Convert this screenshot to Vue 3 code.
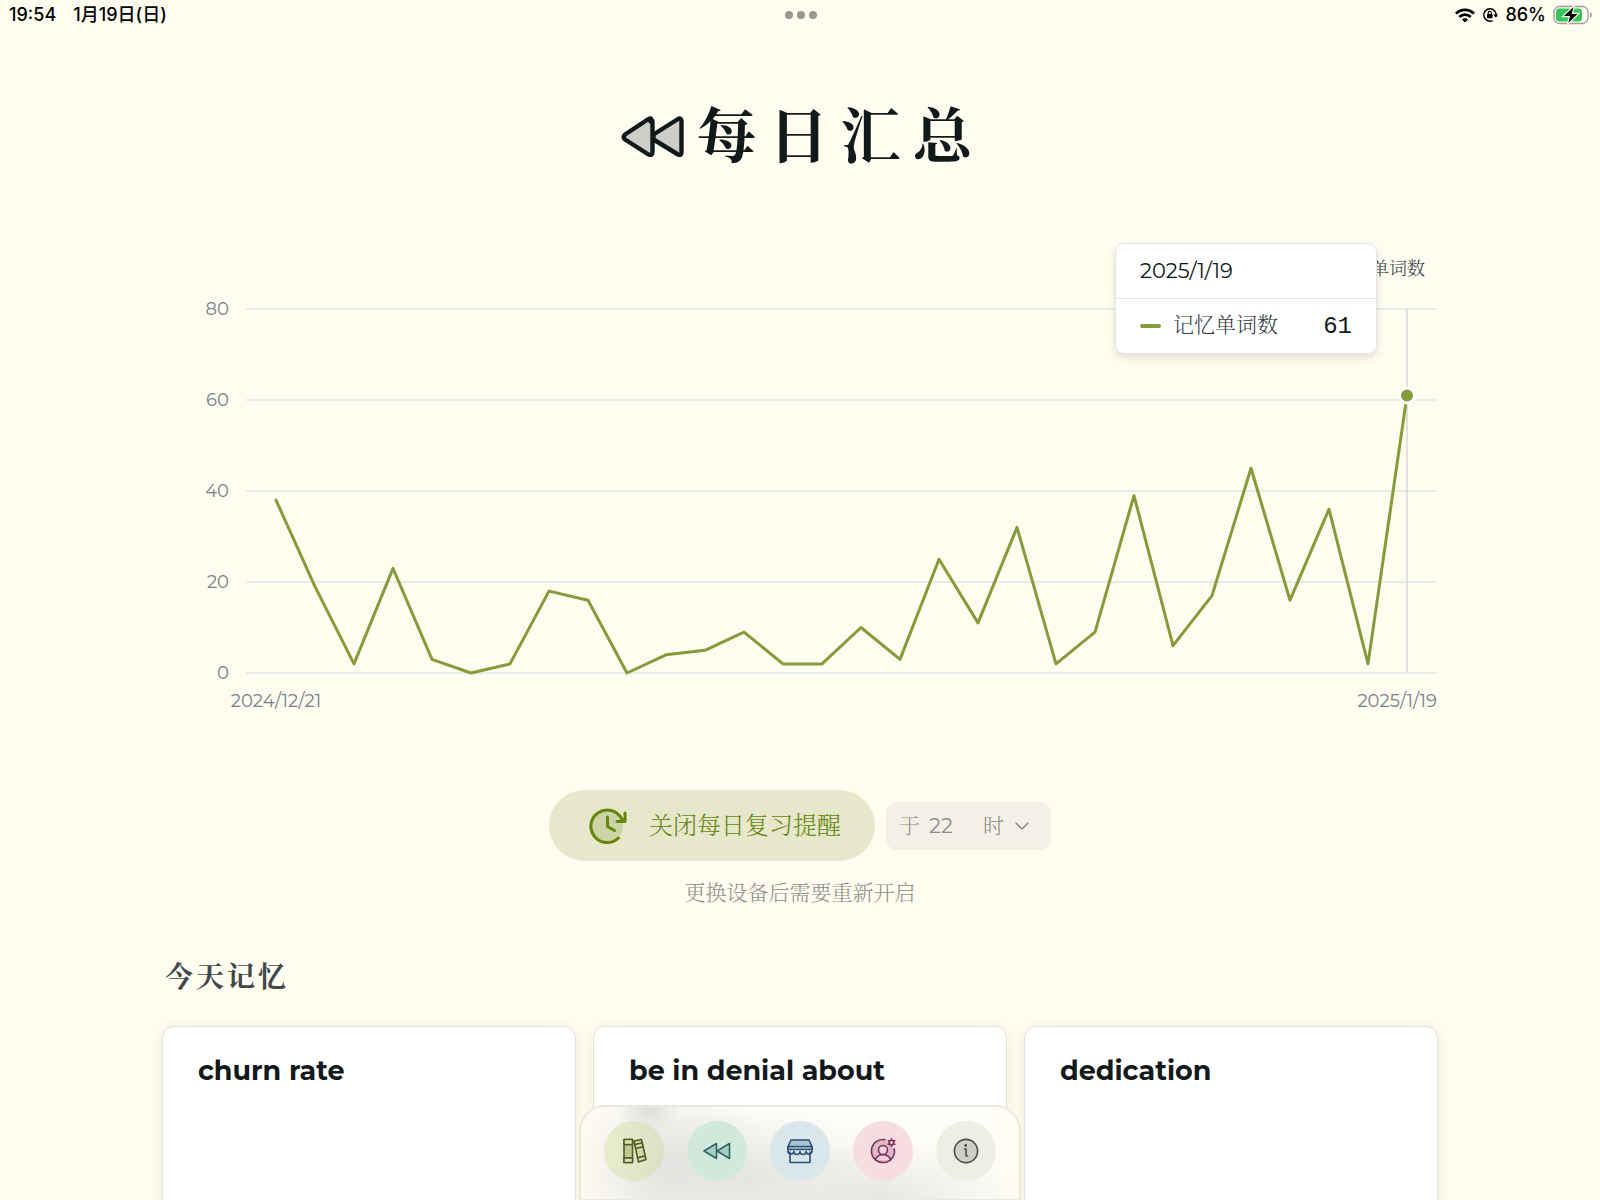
<script setup>
import { ref, computed } from 'vue'

const values = [38, 19, 2, 23, 3, 0, 2, 18, 16, 0, 4, 5, 9, 2, 2, 10, 3, 25, 11, 32, 2, 9, 39, 6, 17, 45, 16, 36, 2, 61]
const ticks = [80, 60, 40, 20, 0]
const plot = { left: 84, right: 1275, top: 80, bottom: 444, inset: 30 }

const xOf = (i) => plot.left + plot.inset + (i * (plot.right - plot.left - plot.inset * 2)) / (values.length - 1)
const yOf = (v) => plot.bottom - (v * (plot.bottom - plot.top)) / 80

const points = computed(() => values.map((v, i) => `${xOf(i).toFixed(1)},${yOf(v).toFixed(1)}`).join(' '))
const lastX = xOf(values.length - 1)
const lastY = yOf(values[values.length - 1])

const hour = ref(22)
const hours = Array.from({ length: 24 }, (_, i) => i)
const words = ['churn rate', 'be in denial about', 'dedication']
</script>

<template>
  <div class="page">
    <header class="status">
      <div class="status-side">
        <span>19:54</span>
        <span>1月19日(日)</span>
      </div>
      <div class="dots"><i></i><i></i><i></i></div>
      <div class="status-side status-right">
        <svg class="wifi" width="20" height="15" viewBox="0 0 20 15" fill="none" stroke="#000" stroke-width="2.7">
          <path d="M1 5.6C6 .6 14 .6 19 5.6" />
          <path d="M4.3 9C7.6 5.8 12.4 5.8 15.7 9" />
          <path d="M10 14.6 6.9 11.4C8.6 9.8 11.4 9.8 13.1 11.4Z" fill="#000" stroke="none" />
        </svg>
        <svg class="lock" width="16" height="16" viewBox="0 0 16 16" fill="none" stroke="#000" stroke-width="1.5">
          <path d="M10.6 13.6A6.2 6.2 0 1 1 13.9 9.8" />
          <path d="M11.4 7.6h4.6l-2.3 3.2z" fill="#000" stroke="none" />
          <rect x="5" y="7" width="5.6" height="4.2" rx=".6" fill="#000" stroke="none" />
          <path d="M6.2 7.4V6a1.6 1.6 0 0 1 3.2 0v1.4" stroke-width="1.1" />
        </svg>
        <span>86%</span>
        <svg class="battery" width="40" height="20" viewBox="0 0 40 20">
          <rect x="1" y="1.5" width="34" height="17" rx="5.5" fill="none" stroke="#9d9d95" stroke-width="1.3" />
          <rect x="3" y="3.5" width="26" height="13" rx="3.5" fill="#34c759" />
          <path d="M37 7v6c2.4-.8 2.4-5.2 0-6z" fill="#9d9d95" />
          <path d="M21.500 0 9.500 11.600h6.700L14.300 20 26 8.400h-6.500z" fill="#000" stroke="#fffdf0" stroke-width="1.2" />
        </svg>
      </div>
    </header>

    <main class="content">
      <h1 class="title">
        <svg width="64" height="42" viewBox="0 0 64 42" fill="#cfcdc7" stroke="#12191b" stroke-width="4.4" stroke-linejoin="round">
          <path d="M29.5 5.5Q31.5 1 27.5 3L4 18.5Q1.5 21 4 23.5L27.5 38.5Q31.5 40 31.5 36V5Z" />
          <path d="M60.5 5Q60 1.5 57 3L32.5 18.500V23.500L57 38.500Q60.500 40 60.500 36Z" />
        </svg>
        <span>每日汇总</span>
      </h1>

      <section class="chart" aria-label="记忆单词数">
        <svg class="plot" viewBox="0 0 1276 486">
          <g class="axis">
            <template v-for="t in ticks" :key="t">
              <line :x1="plot.left" :x2="plot.right" :y1="yOf(t)" :y2="yOf(t)" />
              <text x="67" :y="yOf(t) + 6" text-anchor="end">{{ t }}</text>
            </template>
            <text x="114" y="478" text-anchor="middle">2024/12/21</text>
            <text x="1275" y="478" text-anchor="end">2025/1/19</text>
          </g>
          <text class="legend" x="1263" y="46" text-anchor="end">记忆单词数</text>
          <line class="pointer" :x1="lastX" :x2="lastX" :y1="plot.top" :y2="plot.bottom" />
          <polyline class="series" :points="points" />
          <circle class="marker" :cx="lastX" :cy="lastY" r="7.5" />
        </svg>
        <div class="tooltip">
          <div class="tooltip-date">2025/1/19</div>
          <div class="tooltip-row">
            <i class="swatch"></i>
            <span class="tooltip-name">记忆单词数</span>
            <span class="tooltip-value">61</span>
          </div>
        </div>
      </section>

      <section class="reminder">
        <div class="reminder-row">
          <button type="button" class="remind-btn">
            <svg width="38" height="38" viewBox="0 0 38 38" fill="none" stroke="#65850c" stroke-width="3" stroke-linecap="round" stroke-linejoin="round">
              <circle cx="18.5" cy="19" r="15.5" fill="#ccd3a4" stroke="none" />
              <path d="M29.5 31A16.3 16.3 0 1 1 32.5 11.5L35 14" />
              <path d="M36 6v8.5h-8" />
              <path d="M18.5 10v9.5l7 4" />
            </svg>
            <span>关闭每日复习提醒</span>
          </button>
          <label class="hour">
            <span class="hour-text hour-pre">于</span>
            <select v-model="hour" aria-label="提醒时间">
              <option v-for="h in hours" :key="h" :value="h">{{ h }}</option>
            </select>
            <span class="hour-text">时</span>
            <svg width="16" height="10" viewBox="0 0 16 10" fill="none" stroke="#8d8d87" stroke-width="1.6" stroke-linecap="round" stroke-linejoin="round">
              <path d="M2 2l6 6 6-6" />
            </svg>
          </label>
        </div>
        <p class="note">更换设备后需要重新开启</p>
      </section>

      <h2 class="subtitle">今天记忆</h2>
      <section class="cards">
        <article v-for="w in words" :key="w" class="card">
          <h3>{{ w }}</h3>
        </article>
      </section>
    </main>

    <nav class="dock">
      <button type="button" class="dock-btn books" aria-label="词书">
        <svg viewBox="0 0 28 28" stroke="#515c22">
          <path d="M4 2.500h8.500v23H4zM4 7.500h8.500M4 21h8.500" fill="#c3cb92" />
          <path d="M4 2.500h8.500V7.500H4zM4 21h8.500v4.500H4z" fill="#dfe3bd" />
          <path d="M14 4 21.500 2.500 26 22.500 18.500 25z" fill="#d3d8ab" />
          <path d="M15 7.500 22.300 5.800M15.800 11.500l7.300-1.700M17.600 20.700l7.600-1.800" />
        </svg>
      </button>
      <button type="button" class="dock-btn rewind" aria-label="每日汇总">
        <svg viewBox="0 0 28 28" stroke="#2d6462">
          <path d="M13.500 6.500v15L1 14z" />
          <path d="M26.500 6.500v15L14 14z" />
        </svg>
      </button>
      <button type="button" class="dock-btn shop" aria-label="商店">
        <svg viewBox="0 0 28 28" stroke="#2c5078">
          <path d="M4 15v10.500h20V15" />
          <path d="M5 3h18l3 6.500v3H2v-3z" fill="#a9c2d2" />
          <path d="M2 9.500h24M2 9.500v4a3 3 0 0 0 6 1 3 3 0 0 0 6 0 3 3 0 0 0 6 0 3 3 0 0 0 6-1v-4" />
        </svg>
      </button>
      <button type="button" class="dock-btn user" aria-label="账户">
        <svg viewBox="0 0 28 28" stroke="#7c325b">
          <path d="M25.300 12A11.500 11.500 0 1 1 16 2.700" fill="#dfb8c6" />
          <circle cx="14" cy="13" r="4.500" fill="#f3d2dc" />
          <path d="M6.500 23c1.500-7 13.500-7 15 0" fill="#f3d2dc" />
          <circle cx="22.500" cy="5.500" r="2.300" />
          <path d="M22.500 1.700v1.300M22.500 8v1.300M19.200 3.600l1.200.7M24.600 6.700l1.200.7M19.200 7.400l1.200-.7M24.600 4.300l1.200-.7" />
        </svg>
      </button>
      <button type="button" class="dock-btn info" aria-label="关于">
        <svg viewBox="0 0 28 28" stroke="#4c4c49">
          <circle cx="14" cy="14" r="11.6" fill="#cfcfc6" />
          <path d="M12.500 12h1.600v7h1.300" />
          <circle cx="13.700" cy="8.500" r=".6" fill="#4c4c49" />
        </svg>
      </button>
    </nav>
  </div>
</template>

<style>
body {
  margin: 0;
  background: #fffdf0;
}
</style>

<style scoped>
.page {
  height: 100vh;
  overflow: hidden;
  background: #fffdf0;
  color: #12191b;
  font-family: Montserrat, Inter, "Noto Serif CJK SC", "Noto Sans CJK SC", sans-serif;
}

.status {
  display: grid;
  grid-template-columns: 1fr auto 1fr;
  align-items: center;
  height: 30px;
  padding: 0 7px 0 9px;
  font: 500 18px/30px Inter, "Noto Sans CJK JP", sans-serif;
  color: #000;
}
.status-side {
  display: flex;
  align-items: center;
  gap: 17px;
}
.status-right {
  justify-content: flex-end;
  gap: 7px;
}
.dots {
  display: flex;
  gap: 4px;
}
.dots i {
  width: 8px;
  height: 8px;
  border-radius: 50%;
  background: #98978f;
}

.content {
  max-width: 1276px;
  margin: 0 auto;
  padding-top: 63px;
}

.title {
  display: flex;
  align-items: center;
  justify-content: center;
  gap: 12px;
  margin: 0;
  padding-left: 5px;
  height: 88px;
  font-size: 60px;
  line-height: 88px;
  font-weight: 700;
}
.title span {
  letter-spacing: 12px;
}

.chart {
  position: relative;
  margin-top: 48px;
}
.plot {
  display: block;
  width: 100%;
}
.axis line {
  stroke: #e2e4ea;
  stroke-width: 1.4;
}
.axis text {
  font-size: 18px;
  fill: #7a7f8a;
}
.legend {
  font-size: 18px;
  font-weight: 300;
  fill: #333b46;
}
.pointer {
  stroke: #d5d6d8;
  stroke-width: 1.4;
}
.series {
  fill: none;
  stroke: #869b39;
  stroke-width: 3;
  stroke-linejoin: round;
  stroke-linecap: round;
}
.marker {
  fill: #869b39;
  stroke: #fff;
  stroke-width: 3;
}

.tooltip {
  position: absolute;
  top: 14px;
  right: 61px;
  width: 260px;
  border: 1px solid #e3e5ea;
  border-radius: 9px;
  background: #fff;
  box-shadow: 0 4px 8px rgba(0, 0, 0, 0.12);
  font-size: 21px;
}
.tooltip-date {
  height: 54px;
  padding: 0 24px;
  line-height: 54px;
  border-bottom: 1px solid #e3e5ea;
}
.tooltip-row {
  display: flex;
  align-items: center;
  height: 54px;
  padding: 0 24px;
}
.swatch {
  width: 21px;
  height: 4px;
  margin-right: 12px;
  border-radius: 2px;
  background: #869b39;
}
.tooltip-name {
  flex: 1;
  line-height: 30px;
  padding-bottom: 2px;
  font-weight: 300;
  color: #333b46;
}
.tooltip-value {
  font-family: "Liberation Mono", monospace;
  font-size: 24px;
}

.reminder {
  padding-top: 75px;
}
.reminder-row {
  display: flex;
  align-items: center;
  justify-content: center;
  gap: 11px;
}
.remind-btn {
  display: flex;
  align-items: center;
  gap: 22px;
  height: 71px;
  padding: 0 34px 0 40px;
  border: 0;
  border-radius: 36px;
  background: #e6e7cb;
  color: #65850c;
  font-family: inherit;
  font-size: 24px;
  font-weight: 300;
}
.remind-btn span {
  padding-bottom: 5px;
}
.hour {
  display: flex;
  align-items: center;
  height: 48px;
  padding: 0 21px 0 13px;
  border-radius: 11px;
  background: #f3f1e6;
  color: #8d8d87;
  font-size: 21px;
  font-weight: 300;
}
.hour-text {
  padding-bottom: 4px;
}
.hour-pre {
  margin-right: 9px;
}
.hour select {
  width: 54px;
  padding: 0;
  border: 0;
  background: none;
  appearance: none;
  color: inherit;
  font-family: inherit;
  font-size: 21px;
}
.hour svg {
  margin-left: 10px;
}
.note {
  margin: 16px 0 0;
  text-align: center;
  font-size: 21px;
  line-height: 32px;
  font-weight: 300;
  color: #8d8d87;
}

.subtitle {
  margin: 48px 0 0;
  padding-left: 3px;
  font-size: 28px;
  line-height: 40px;
  font-weight: 700;
  letter-spacing: 3px;
  color: #42484a;
}
.cards {
  display: grid;
  grid-template-columns: repeat(3, 1fr);
  gap: 17px;
  margin-top: 29px;
}
.card {
  min-height: 240px;
  box-sizing: border-box;
  padding: 24px 35px;
  border: 1px solid #e6e4d8;
  border-radius: 12px;
  background: #fff;
  box-shadow: 0 2px 14px rgba(80, 70, 20, 0.1);
}
.card h3 {
  margin: 0;
  font-size: 27px;
  line-height: 40px;
  font-weight: 700;
}

.dock {
  position: fixed;
  left: 50%;
  bottom: 0;
  transform: translateX(-50%);
  display: flex;
  gap: 23px;
  padding: 14px 23px 18px;
  border: 2px solid #ebe9da;
  border-bottom-width: 1px;
  border-radius: 26px 26px 0 0;
  background:
    radial-gradient(ellipse 32px 34px at 68px 0, #dededc, transparent),
    radial-gradient(ellipse 100px 90px at 90px 60px, rgba(225, 225, 223, 0.9), transparent),
    radial-gradient(ellipse 150px 70px at 170px 70px, rgba(226, 226, 224, 0.9), transparent),
    radial-gradient(ellipse 140px 60px at 300px 92px, rgba(228, 228, 224, 0.9), transparent),
    linear-gradient(90deg, #fffbf0, #fefdf8 12%, #fefdf9 92%, #fffcf0);
}
.dock-btn {
  display: grid;
  place-items: center;
  width: 60px;
  height: 60px;
  padding: 0;
  border: 0;
  border-radius: 50%;
}
.dock-btn svg {
  width: 28px;
  height: 28px;
  fill: none;
  stroke-width: 1.6;
  stroke-linecap: round;
  stroke-linejoin: round;
}
.dock-btn.rewind svg {
  fill: #a9cfc4;
}
.books { background: linear-gradient(90deg, #e9ebcd, #dde0c3); }
.rewind { background: #d1e8dd; }
.shop { background: #d9e6eb; }
.user { background: #f5dde1; }
.info { background: #efeee5; }
</style>
